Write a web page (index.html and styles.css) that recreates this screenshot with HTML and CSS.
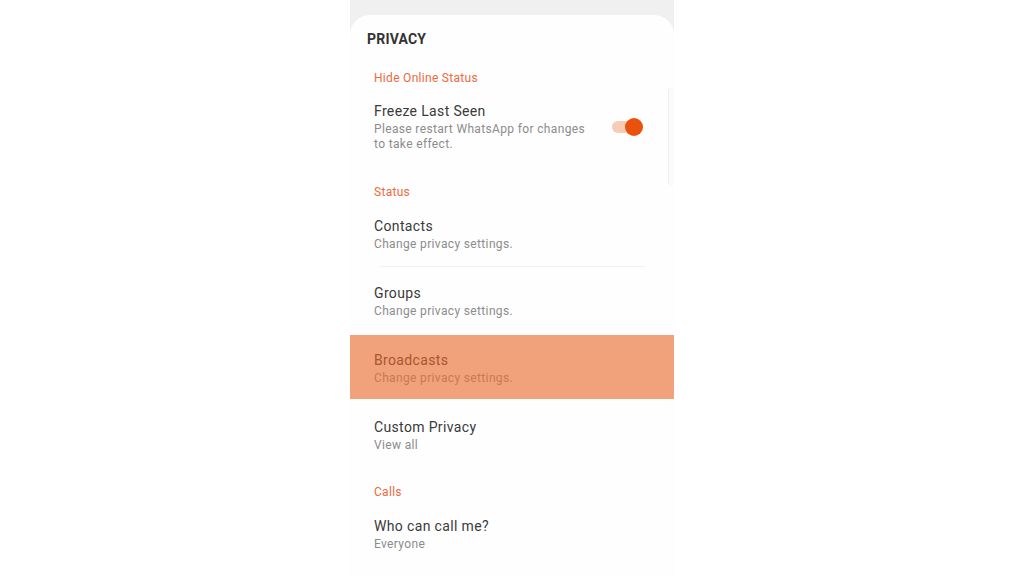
FILE: index.html
```html
<!DOCTYPE html>
<html>
<head>
<meta charset="utf-8">
<link rel="stylesheet" href="styles.css">
</head>
<body>
<div class="phone">
  <div class="card">
    <div class="edge"></div>
    <h1 class="title">PRIVACY</h1>
    <div class="section first">Hide Online Status</div>
    <div class="row toggle-row">
      <div class="text">
        <div class="name">Freeze Last Seen</div>
        <div class="sub">Please restart WhatsApp for changes<br>to take effect.</div>
      </div>
      <div class="switch"><span class="knob"></span></div>
    </div>
    <div class="section status">Status</div>
    <div class="row before-divider">
      <div class="name">Contacts</div>
      <div class="sub">Change privacy settings.</div>
    </div>
    <div class="divider"></div>
    <div class="row">
      <div class="name">Groups</div>
      <div class="sub">Change privacy settings.</div>
    </div>
    <div class="row active">
      <div class="name">Broadcasts</div>
      <div class="sub">Change privacy settings.</div>
    </div>
    <div class="row">
      <div class="name">Custom Privacy</div>
      <div class="sub">View all</div>
    </div>
    <div class="section calls">Calls</div>
    <div class="row">
      <div class="name">Who can call me?</div>
      <div class="sub">Everyone</div>
    </div>
  </div>
</div>
</body>
</html>
```
FILE: styles.css
```css
html, body {
  margin: 0;
  padding: 0;
  background: #ffffff;
  font-family: Roboto, "Liberation Sans", sans-serif;
}
.phone {
  width: 324px;
  height: 576px;
  margin: 0 auto;
  background: #f0f0f0;
  padding-top: 15px;
  box-sizing: border-box;
  overflow: hidden;
}
.card {
  position: relative;
  background: #fefefe;
  border-radius: 20px 20px 0 0;
  height: 561px;
  padding-top: 14px;
  box-sizing: border-box;
}
.edge {
  position: absolute;
  right: 0;
  top: 73px;
  width: 5px;
  height: 97px;
  border-left: 1px solid #efefef;
  border-radius: 4px 0 0 4px;
  background: #fbfbfb;
}
.title {
  margin: 0;
  padding-left: 17px;
  font-size: 14px;
  line-height: 20px;
  font-weight: 700;
  letter-spacing: 0.2px;
  color: #333333;
}
.section {
  padding: 17px 0 0 24px;
  font-size: 12px;
  line-height: 16px;
  letter-spacing: 0.3px;
  color: #ee6a3c;
}
.section.first { padding-top: 21px; }
.section.status { padding-top: 18px; }
.section.calls { padding-top: 16px; }
.row {
  padding: 17px 24px 14px 24px;
  height: 36px;
}
.row.before-divider { padding-bottom: 13px; }
.toggle-row {
  height: auto;
  padding-top: 16px;
  display: flex;
  align-items: center;
  justify-content: space-between;
  padding-right: 32px;
}
.name {
  font-size: 14px;
  line-height: 18px;
  letter-spacing: 0.35px;
  color: #3a3a3a;
}
.sub {
  margin-top: 2px;
  font-size: 12px;
  line-height: 15px;
  letter-spacing: 0.35px;
  color: #8c8c8c;
}
.switch {
  position: relative;
  width: 30px;
  height: 12px;
  border-radius: 6px;
  background: #f7cbb4;
}
.knob {
  position: absolute;
  right: -1px;
  top: -3px;
  width: 18px;
  height: 18px;
  border-radius: 50%;
  background: #e9520c;
}
.divider {
  height: 1px;
  margin: 0 29px 0 30px;
  background: #f1f1f1;
}
.row.active {
  background: #f2a27a;
  padding-top: 16px;
  padding-bottom: 12px;
  margin: 1px 0 2px 0;
}
.row.active .name { color: #a65630; }
.row.active .sub { color: #c57a52; }
```
